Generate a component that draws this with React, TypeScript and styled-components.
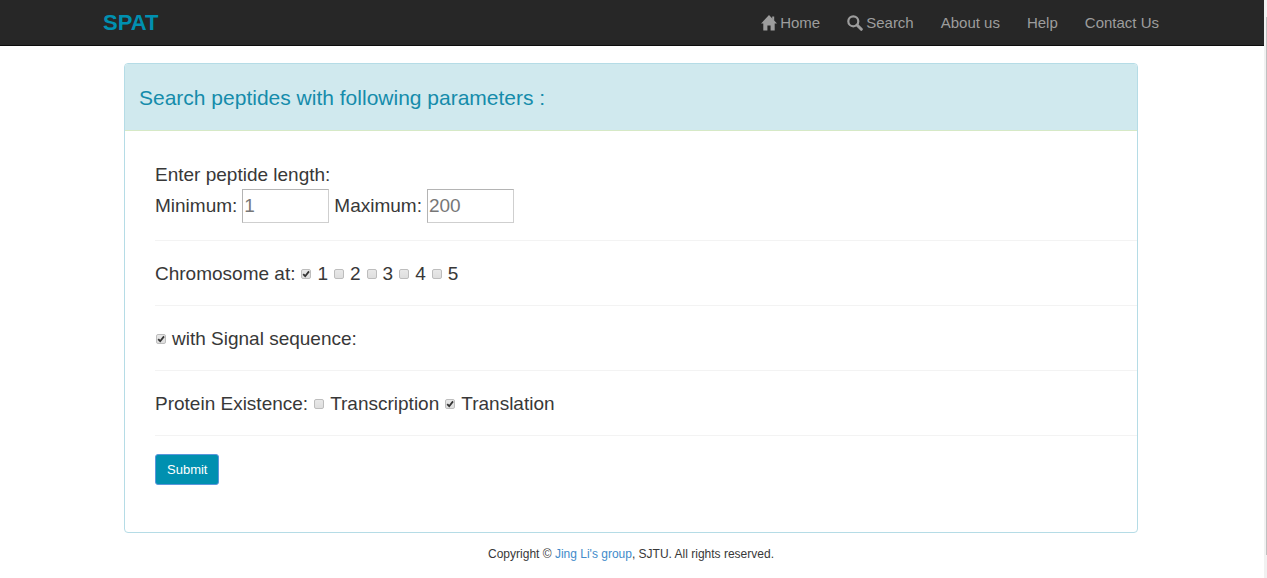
import React from "react";
import styled, { createGlobalStyle } from "styled-components";

const GlobalStyle = createGlobalStyle`
  *, *::before, *::after { box-sizing: border-box; }
  body {
    margin: 0;
    background: #fff;
    color: #383838;
    font-family: "Liberation Sans", Arial, Helvetica, sans-serif;
  }
`;

const Shell = styled.div`
  display: flex;
  min-height: 100vh;
`;

const Page = styled.div`
  flex: 1;
  min-width: 0;
`;

const ScrollTrack = styled.div`
  width: 3px;
  padding: 17px 0 23px 2px;
  background: #f1f1f1;
  display: flex;
`;

const ScrollThumb = styled.div`
  flex: 1;
  background: #c1c1c1;
`;

const TopBar = styled.header`
  padding-right: 2px;
  background: #272727;
  border-bottom: 1px solid #0c0c0c;
`;

const TopBarInner = styled.div`
  max-width: 1056px;
  min-height: 45px;
  margin: 0 auto;
  display: flex;
  align-items: center;
  justify-content: space-between;
`;

const Brand = styled.a`
  color: #0090b0;
  font-size: 22px;
  line-height: 28px;
  font-weight: bold;
  text-decoration: none;
`;

const Nav = styled.nav`
  display: flex;
  gap: 27px;
`;

const NavLink = styled.a`
  display: flex;
  align-items: center;
  gap: 3px;
  color: #9d9d9d;
  font-size: 15px;
  line-height: 20px;
  text-decoration: none;
`;

const Main = styled.main`
  padding: 17px 2px 0 0;
`;

const Panel = styled.section`
  max-width: 1014px;
  margin: 0 auto;
  border: 1px solid #b5dce6;
  border-radius: 4px;
  overflow: hidden;
`;

const PanelHeading = styled.h1`
  margin: 0;
  padding: 20px 14px 18px;
  background: #d0e9ee;
  border-bottom: 1px solid #d6e9c6;
  color: #158cab;
  font-size: 21px;
  line-height: 28px;
  font-weight: normal;
`;

const Form = styled.form`
  padding: 30px 0 47px 30px;
  font-size: 19px;
`;

const Group = styled.fieldset`
  min-width: 0;
  margin: 0;
  padding: 0 0 17px;
  border: 0;
  border-bottom: 1px solid #f3f3f3;
`;

const CheckGroup = styled(Group)`
  padding: 18px 0 17px;
  display: flex;
  align-items: center;
  gap: 5px;
  line-height: 29px;
`;

const Line = styled.div`
  display: flex;
  align-items: center;
  gap: 5px;
  line-height: 28px;
`;

const NumberInput = styled.input`
  width: 87px;
  height: 34px;
  padding: 0 1px;
  border: 1px solid #b4b4b4;
  border-right-color: #cfcfcf;
  border-bottom-color: #cfcfcf;
  background: #fff;
  font: inherit;
  &::placeholder { color: #777; opacity: 1; }
`;

const CheckLabel = styled.label`
  display: flex;
  align-items: center;
  gap: 6px;
`;

const CheckHolder = styled.span`
  display: grid;
  padding-left: 1px;
  > * { grid-area: 1 / 1; }
`;

const CheckInput = styled.input`
  appearance: none;
  width: 10px;
  height: 10px;
  margin: 0;
  border: 1px solid #bdbdbd;
  border-radius: 2px;
  background: linear-gradient(#e8e8e8, #dedede);
  & + svg { visibility: hidden; pointer-events: none; }
  &:checked + svg { visibility: visible; }
`;

const SubmitButton = styled.button`
  display: block;
  height: 31px;
  margin-top: 18px;
  padding: 0 11px;
  border: 1px solid #5a96dc;
  border-radius: 3px;
  background: #0090b0;
  color: #fff;
  font-family: inherit;
  font-size: 13px;
`;

const Footer = styled.footer`
  padding: 12px 2px 12px 0;
  text-align: center;
  font-size: 12px;
  line-height: 18px;
  a { color: #428bca; text-decoration: none; }
`;

function HomeIcon() {
  return (
    <svg width="16" height="16" viewBox="0 0 16 16" fill="currentColor" aria-hidden="true">
      <path d="M8 0 L16 8.6 H13.7 V15.5 H9.6 V10.5 H6.4 V15.5 H2.3 V8.6 H0 Z M11.2 1.5 H13.2 V5.4 L11.2 3.2 Z" />
    </svg>
  );
}

function SearchIcon() {
  return (
    <svg width="16" height="16" viewBox="0 0 16 16" fill="none" stroke="currentColor" aria-hidden="true">
      <circle cx="6.3" cy="6.3" r="5" strokeWidth="2.2" />
      <path d="M10 10 L14.3 14.3" strokeWidth="3" strokeLinecap="round" />
    </svg>
  );
}

function Check({ label, checked }: { label: string; checked?: boolean }) {
  return (
    <CheckLabel>
      <CheckHolder>
        <CheckInput type="checkbox" defaultChecked={checked} />
        <svg width="10" height="10" viewBox="0 0 10 10" fill="none" stroke="#333" strokeWidth="1.8" aria-hidden="true">
          <path d="M2.2 5.2 L4.2 7.2 L8 2.4" />
        </svg>
      </CheckHolder>
      {label}
    </CheckLabel>
  );
}

export default function App() {
  return (
    <Shell>
      <GlobalStyle />
      <Page>
        <TopBar>
          <TopBarInner>
            <Brand href="#">SPAT</Brand>
            <Nav>
              <NavLink href="#home"><HomeIcon />Home</NavLink>
              <NavLink href="#search"><SearchIcon />Search</NavLink>
              <NavLink href="#about">About us</NavLink>
              <NavLink href="#help">Help</NavLink>
              <NavLink href="#contact">Contact Us</NavLink>
            </Nav>
          </TopBarInner>
        </TopBar>
        <Main>
          <Panel>
            <PanelHeading>Search peptides with following parameters :</PanelHeading>
            <Form onSubmit={(event) => event.preventDefault()}>
              <Group aria-label="Peptide length">
                <Line>Enter peptide length:</Line>
                <Line>
                  <label htmlFor="min">Minimum:</label>
                  <NumberInput id="min" placeholder="1" />
                  <label htmlFor="max">Maximum:</label>
                  <NumberInput id="max" placeholder="200" />
                </Line>
              </Group>
              <CheckGroup aria-label="Chromosome">
                <span>Chromosome at:</span>
                <Check label="1" checked />
                <Check label="2" />
                <Check label="3" />
                <Check label="4" />
                <Check label="5" />
              </CheckGroup>
              <CheckGroup aria-label="Signal sequence">
                <Check label="with Signal sequence:" checked />
              </CheckGroup>
              <CheckGroup aria-label="Protein existence">
                <span>Protein Existence:</span>
                <Check label="Transcription" />
                <Check label="Translation" checked />
              </CheckGroup>
              <SubmitButton type="submit">Submit</SubmitButton>
            </Form>
          </Panel>
        </Main>
        <Footer>
          Copyright © <a href="#group">Jing Li's group</a>, SJTU. All rights reserved.
        </Footer>
      </Page>
      <ScrollTrack aria-hidden="true">
        <ScrollThumb />
      </ScrollTrack>
    </Shell>
  );
}
